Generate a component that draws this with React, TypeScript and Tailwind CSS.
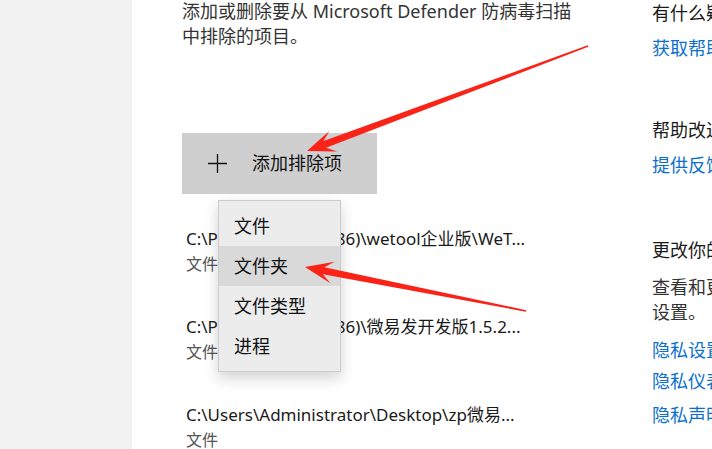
import React from "react";

type Pt = [number, number];

// red annotation arrow, tapered shaft + notched head
const Arrow = ({ from, to }: { from: Pt; to: Pt }) => {
  const dx = to[0] - from[0];
  const dy = to[1] - from[1];
  const len = Math.hypot(dx, dy);
  const u: Pt = [dx / len, dy / len];
  const n: Pt = [-u[1], u[0]];
  const L = 28;
  const W = 11;
  const at = (d: number, w: number): string =>
    `${to[0] - u[0] * d + n[0] * w},${to[1] - u[1] * d + n[1] * w}`;
  const tail = (w: number) => `${from[0] + n[0] * w},${from[1] + n[1] * w}`;
  const pts = [
    tail(0.8),
    at(L - 9, 3.6),
    at(L, W),
    `${to[0]},${to[1]}`,
    at(L, -W),
    at(L - 9, -3.6),
    tail(-0.8),
  ].join(" ");
  return <polygon points={pts} fill="#fa2317" />;
};

const menuItems = ["文件", "文件夹", "文件类型", "进程"];

const exclusions = [
  "C:\\Program Files (x86)\\wetool企业版\\WeT...",
  "C:\\Program Files (x86)\\微易发开发版1.5.2...",
  "C:\\Users\\Administrator\\Desktop\\zp微易...",
];

export default function App() {
  return (
    <div className="relative flex h-[449px] w-[712px] overflow-hidden bg-white font-['Noto_Sans','Noto_Sans_CJK_SC',sans-serif]">
      <div className="w-[132px] shrink-0 bg-[#f2f2f2]" />

      <div className="w-[520px] shrink-0 pl-[50px]">
        <div className="-mt-px text-[18px] leading-[25px] text-[#333]">
          <p>添加或删除要从 Microsoft Defender 防病毒扫描</p>
          <p>中排除的项目。</p>
        </div>

        <div className="relative mt-[84px]">
          <div className="flex h-[61px] w-[195px] items-center bg-[#cfcfcf]">
            <svg width="19" height="19" viewBox="0 0 19 19" className="ml-[26px]">
              <path d="M9.5 0v19M0 9.5h19" stroke="#111" strokeWidth="1.3" />
            </svg>
            <span className="ml-[25px] text-[18px] text-[#111]">添加排除项</span>
          </div>

          <div className="absolute left-[36px] top-[67px] z-10 w-[123px] border border-[#cccccc] bg-[#ececec] py-[5px] shadow-[0_6px_14px_rgba(0,0,0,0.18)]">
            {menuItems.map((item) => (
              <div
                key={item}
                className={
                  item === "文件夹"
                    ? "flex h-[40px] items-center bg-[#d9d9d9] pl-[15px] text-[18px] text-[#111]"
                    : "flex h-[40px] items-center pl-[15px] text-[18px] text-[#111]"
                }
              >
                {item}
              </div>
            ))}
          </div>
        </div>

        <div className="mt-[33px] pl-[4px]">
          {exclusions.map((path) => (
            <div key={path} className="mb-[40px] whitespace-nowrap">
              <p className="text-[17px] leading-[24px] text-[#1a1a1a]">{path}</p>
              <p className="mt-[2px] text-[16px] leading-[22px] text-[#555]">文件</p>
            </div>
          ))}
        </div>
      </div>

      <div className="shrink-0 whitespace-nowrap text-[18px]">
        <p className="leading-[26px] text-[#1a1a1a]">有什么疑问？</p>
        <p className="mt-[9px] leading-[26px] text-[#0b6fcc]">获取帮助</p>

        <p className="mt-[56px] leading-[26px] text-[#1a1a1a]">帮助改进 Windows 安全中心</p>
        <p className="mt-[9px] leading-[26px] text-[#0b6fcc]">提供反馈</p>

        <p className="mt-[59px] leading-[26px] text-[#1a1a1a]">更改你的隐私设置</p>
        <div className="mt-[12px] leading-[25px] text-[#333]">
          <p>查看和更改 Windows 10 设备的隐私</p>
          <p>设置。</p>
        </div>
        <p className="mt-[12px] leading-[26px] text-[#0b6fcc]">隐私设置</p>
        <p className="mt-[5px] leading-[26px] text-[#0b6fcc]">隐私仪表板</p>
        <p className="mt-[8px] leading-[26px] text-[#0b6fcc]">隐私声明</p>
      </div>

      <svg className="pointer-events-none absolute inset-0 z-20" width="712" height="449">
        <Arrow from={[588, 46]} to={[307, 151]} />
        <Arrow from={[526, 311]} to={[305, 267]} />
      </svg>
    </div>
  );
}
